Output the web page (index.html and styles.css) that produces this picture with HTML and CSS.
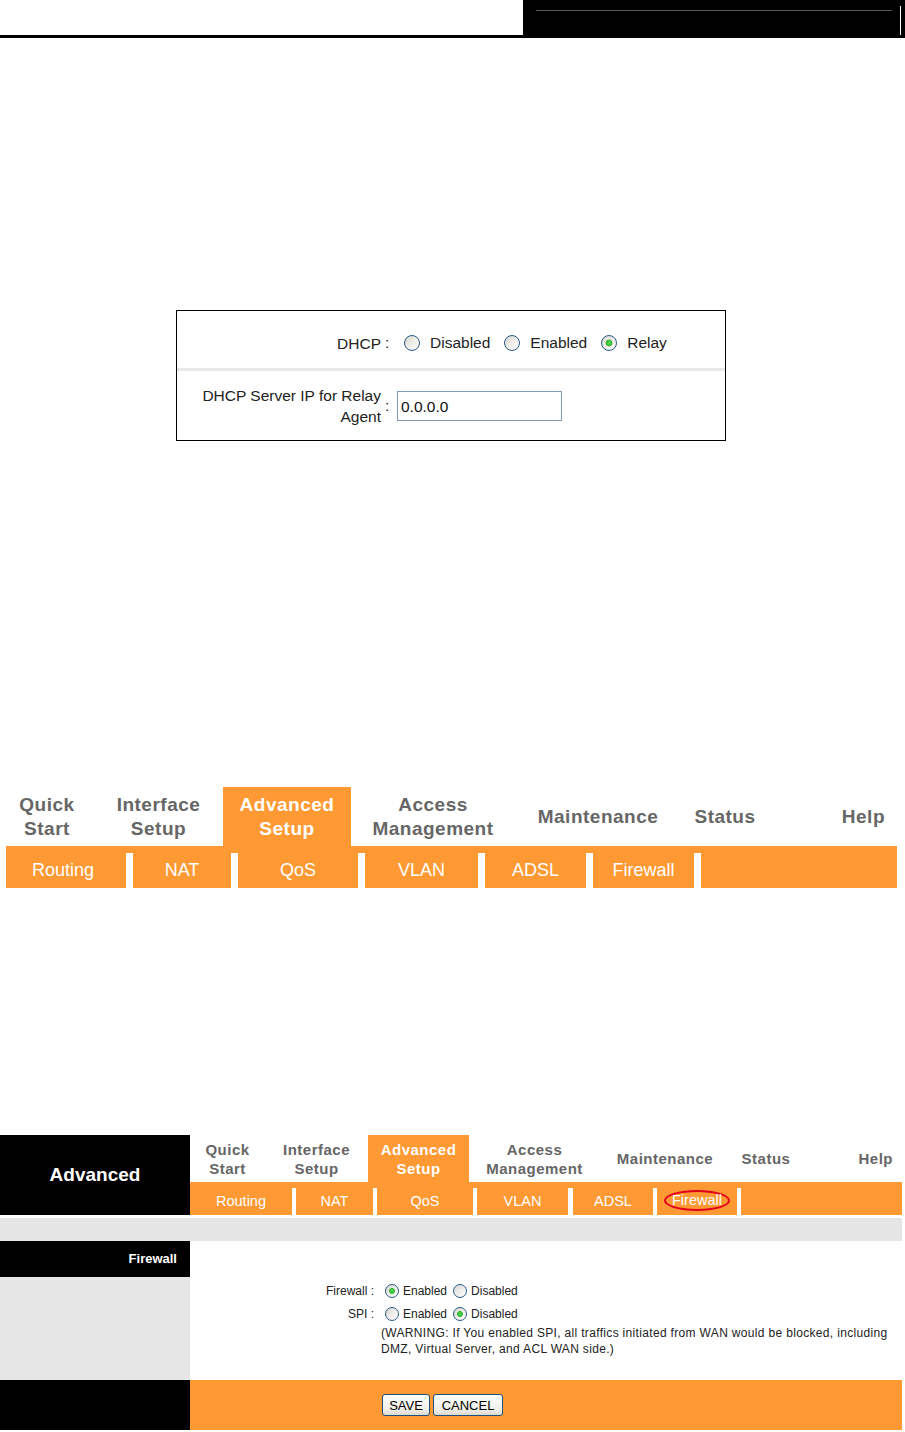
FILE: index.html
```html
<!DOCTYPE html>
<html lang="en">
<head>
<meta charset="utf-8">
<title>Advanced Setup - DHCP and Firewall</title>
<link rel="stylesheet" href="styles.css">
</head>
<body>
<div class="page">
  <header class="doc-head">
    <div class="doc-head-left"></div>
    <div class="doc-head-right">
      <div class="doc-head-rule"></div>
      <div class="doc-head-vline"></div>
    </div>
  </header>

  <section class="dhcp-box">
    <div class="dhcp-row dhcp-row-top">
      <div class="dhcp-label">DHCP</div>
      <div class="dhcp-colon">:</div>
      <div class="dhcp-value"><label class="opt opt-lg"><input type="radio" name="dhcp" class="radio radio-lg">Disabled</label><label class="opt opt-lg"><input type="radio" name="dhcp" class="radio radio-lg">Enabled</label><label class="opt opt-lg"><input type="radio" name="dhcp" class="radio radio-lg" checked>Relay</label></div>
    </div>
    <div class="dhcp-sep"></div>
    <div class="dhcp-row dhcp-row-bottom">
      <div class="dhcp-label">DHCP Server IP for Relay<br>Agent</div>
      <div class="dhcp-colon">:</div>
      <div class="dhcp-value"><input class="ip-input" type="text" value="0.0.0.0"></div>
    </div>
  </section>

  <nav class="menu-lg">
    <div class="tabs-lg">
      <div class="tab">Quick<br>Start</div>
      <div class="tab tab-iface">Interface<br>Setup</div>
      <div class="tab tab-active">Advanced<br>Setup</div>
      <div class="tab">Access<br>Management</div>
      <div class="tab">Maintenance</div>
      <div class="tab">Status</div>
      <div class="tab tab-help">Help</div>
    </div>
    <div class="sub-lg">
      <span class="seg w-routing">Routing</span><span class="sep"></span>
      <span class="seg w-nat">NAT</span><span class="sep"></span>
      <span class="seg w-qos">QoS</span><span class="sep"></span>
      <span class="seg w-vlan">VLAN</span><span class="sep"></span>
      <span class="seg w-adsl">ADSL</span><span class="sep"></span>
      <span class="seg w-fw">Firewall</span><span class="sep"></span>
      <span class="seg seg-rest"></span>
    </div>
  </nav>

  <div class="router">
    <div class="router-top">
      <div class="brand">Advanced</div>
      <nav class="menu-sm">
        <div class="tabs-sm">
          <div class="tab">Quick<br>Start</div>
          <div class="tab">Interface<br>Setup</div>
          <div class="tab tab-active">Advanced<br>Setup</div>
          <div class="tab">Access<br>Management</div>
          <div class="tab">Maintenance</div>
          <div class="tab">Status</div>
          <div class="tab tab-help">Help</div>
        </div>
        <div class="sub-sm">
          <span class="seg w-routing">Routing</span><span class="sep"></span>
          <span class="seg w-nat">NAT</span><span class="sep"></span>
          <span class="seg w-qos">QoS</span><span class="sep"></span>
          <span class="seg w-vlan">VLAN</span><span class="sep sep-wide"></span>
          <span class="seg w-adsl">ADSL</span><span class="sep"></span>
          <span class="seg w-fw"><span class="circled">Firewall</span></span><span class="sep"></span>
          <span class="seg seg-rest"></span>
        </div>
      </nav>
    </div>

    <div class="strip"></div>

    <div class="fw">
      <div class="fw-side">
        <div class="fw-side-head">Firewall</div>
      </div>
      <div class="fw-main">
        <div class="fw-grid">
          <div class="fw-label fw-row1">Firewall :</div>
          <div class="fw-value fw-row1"><label class="opt opt-sm"><input type="radio" name="fw" class="radio radio-sm" checked>Enabled</label><label class="opt opt-sm"><input type="radio" name="fw" class="radio radio-sm">Disabled</label></div>
          <div class="fw-label fw-row2">SPI :</div>
          <div class="fw-value fw-row2"><label class="opt opt-sm"><input type="radio" name="spi" class="radio radio-sm">Enabled</label><label class="opt opt-sm"><input type="radio" name="spi" class="radio radio-sm" checked>Disabled</label></div>
          <div class="fw-warning">(WARNING: If You enabled SPI, all traffics initiated from WAN would be blocked, including DMZ, Virtual Server, and ACL WAN side.)</div>
        </div>
      </div>
    </div>

    <div class="fw-foot">
      <div class="fw-foot-side"></div>
      <div class="fw-foot-main">
        <button class="btn btn-save" type="button">SAVE</button>
        <button class="btn btn-cancel" type="button">CANCEL</button>
      </div>
    </div>
  </div>
</div>
</body>
</html>
```

FILE: styles.css
```css
html, body {
  margin: 0;
  padding: 0;
  background: #fff;
}

body {
  font-family: "Liberation Sans", Arial, sans-serif;
  color: #222;
}

.page {
  width: 905px;
}

/* document header */
.doc-head {
  display: flex;
  height: 35px;
  border-bottom: 3px solid #000;
}

.doc-head-left {
  width: 523px;
}

.doc-head-right {
  flex: 1;
  display: flex;
  background: #000;
}

.doc-head-rule {
  flex: 1;
  height: 0;
  margin: 10px 8px 0 13px;
  border-top: 1px solid #5a5a5a;
}

.doc-head-vline {
  width: 1px;
  margin: 6px 4px 0 0;
  background: #fff;
}

/* DHCP box */
.dhcp-box {
  margin: 272px 0 0 176px;
  width: 548px;
  border: 1px solid #000;
  font-size: 15.5px;
  color: #222;
}

.dhcp-row {
  display: grid;
  grid-template-columns: 204px 16px 1fr;
  align-items: center;
}

.dhcp-row-top {
  height: 50px;
  padding-top: 7px;
}

.dhcp-row-bottom {
  height: 69px;
}

.dhcp-label {
  text-align: right;
  line-height: 21px;
}

.dhcp-colon {
  padding-left: 4px;
}

.dhcp-value {
  display: flex;
  align-items: center;
}

.dhcp-sep {
  height: 3px;
  background: #e8e8e8;
}

.ip-input {
  box-sizing: border-box;
  width: 165px;
  height: 30px;
  margin: 0;
  padding: 2px 3px 0;
  border: 1px solid #7f9db9;
  font: 15.5px "Liberation Sans", Arial, sans-serif;
  color: #111;
  background: #fff;
}

/* options & radios */
.opt {
  display: inline-flex;
  align-items: center;
}

.opt-lg {
  gap: 10px;
  margin-right: 14px;
}

.opt-lg:first-child {
  margin-left: 7px;
}

.opt-sm {
  gap: 4px;
  margin-right: 6px;
  font-size: 12px;
}

.opt-sm:first-child {
  margin-left: 4px;
}

.radio {
  appearance: none;
  -webkit-appearance: none;
  box-sizing: border-box;
  margin: 0;
  border: 1px solid #2a5b8b;
  border-radius: 50%;
  background: linear-gradient(135deg, #d4d4ce 0%, #ecebe6 45%, #ffffff 100%);
}

.radio:checked {
  background:
    radial-gradient(circle at 50% 50%, #5ee05e 0, #2db52d 30%, rgba(33, 161, 33, 0) 38%),
    linear-gradient(135deg, #d4d4ce 0%, #ecebe6 45%, #ffffff 100%);
}

.radio-lg {
  width: 16px;
  height: 16px;
}

.radio-sm {
  width: 14px;
  height: 14px;
}

/* big menu */
.menu-lg {
  margin: 346px 0 0 6px;
  width: 891px;
}

.tabs-lg {
  display: grid;
  grid-template-columns: 82px 135px 128px 164px 166px 88px 128px;
  height: 59px;
}

.tab {
  display: flex;
  align-items: center;
  justify-content: center;
  text-align: center;
  font-weight: bold;
  color: #666;
}

.tabs-lg .tab {
  font-size: 19px;
  line-height: 24px;
  letter-spacing: 0.5px;
}

.tabs-lg .tab-iface {
  padding-left: 6px;
}

.tab-active {
  background: #ff9933;
  color: #fff;
}

.tabs-lg .tab-help {
  justify-content: flex-end;
  padding-right: 12px;
}

.sub-lg,
.sub-sm {
  display: flex;
  background: #ff9933;
}

.sub-lg {
  height: 42px;
}

.seg {
  display: flex;
  align-items: center;
  justify-content: center;
  color: #fff;
}

.sub-lg .seg {
  font-size: 18px;
  padding-top: 6px;
  box-sizing: border-box;
}

.sub-lg .w-routing {
  padding-right: 6px;
}

.sep {
  align-self: flex-end;
  background: #fff;
}

.sub-lg .sep {
  width: 7px;
  height: 35px;
}

.sub-lg .w-routing { width: 120px; }
.sub-lg .w-nat { width: 98px; }
.sub-lg .w-qos { width: 120px; }
.sub-lg .w-vlan { width: 113px; }
.sub-lg .w-adsl { width: 101px; }
.sub-lg .w-fw { width: 101px; }

.seg-rest {
  flex: 1;
}

/* router UI */
.router {
  margin-top: 247px;
  width: 902px;
}

.router-top {
  display: grid;
  grid-template-columns: 190px 712px;
}

.brand {
  display: flex;
  align-items: center;
  justify-content: center;
  height: 80px;
  background: #000;
  color: #fff;
  font-size: 19px;
  font-weight: bold;
}

.tabs-sm {
  display: grid;
  grid-template-columns: 75px 103px 101px 131px 130px 72px 100px;
  height: 47px;
}

.tabs-sm .tab {
  font-size: 15px;
  line-height: 19px;
  letter-spacing: 0.5px;
}

.tabs-sm .tab-help {
  justify-content: flex-end;
  padding-right: 9px;
}

.sub-sm {
  height: 33px;
}

.sub-sm .seg {
  font-size: 14.5px;
  padding-top: 4px;
  box-sizing: border-box;
}

.sub-sm .sep {
  width: 4px;
  height: 27px;
}

.sub-sm .sep-wide {
  width: 5px;
}

.sub-sm .w-routing { width: 102px; }
.sub-sm .w-nat { width: 77px; }
.sub-sm .w-qos { width: 96px; }
.sub-sm .w-vlan { width: 91px; }
.sub-sm .w-adsl { width: 80px; }
.sub-sm .w-fw { width: 80px; }

.circled {
  display: inline-block;
  padding: 1px 6px;
  line-height: 15px;
  border: 2px solid #e3001b;
  border-radius: 50%;
}

.strip {
  margin-top: 3px;
  height: 23px;
  background: #e5e5e5;
}

.fw {
  display: grid;
  grid-template-columns: 190px 1fr;
}

.fw-side {
  background: #e6e6e6;
}

.fw-side-head {
  height: 36px;
  line-height: 36px;
  background: #000;
  color: #fff;
  font-size: 13px;
  font-weight: bold;
  text-align: right;
  padding-right: 13px;
}

.fw-main {
  background: #fff;
  padding: 38px 0 23px;
  font-size: 12px;
  color: #222;
}

.fw-grid {
  display: grid;
  grid-template-columns: 184px 1fr;
  column-gap: 7px;
}

.fw-label {
  display: flex;
  align-items: center;
  justify-content: flex-end;
}

.fw-value {
  display: flex;
  align-items: center;
}

.fw-row1 {
  height: 24px;
}

.fw-row2 {
  height: 22px;
}

.fw-warning {
  grid-column: 2;
  max-width: 514px;
  line-height: 16px;
  letter-spacing: 0.33px;
}

.fw-foot {
  display: grid;
  grid-template-columns: 190px 1fr;
  height: 50px;
}

.fw-foot-side {
  background: #000;
}

.fw-foot-main {
  display: flex;
  align-items: center;
  gap: 3px;
  padding-left: 192px;
  background: #ff9933;
}

.btn {
  box-sizing: border-box;
  height: 22px;
  margin: 0;
  padding: 0;
  border: 1px solid #1d4f7c;
  border-radius: 3px;
  background: linear-gradient(#ffffff, #f0efe8 70%, #dcdad0);
  font: 13px "Liberation Sans", Arial, sans-serif;
  color: #000;
}

.btn-save {
  width: 48px;
}

.btn-cancel {
  width: 70px;
}
```
